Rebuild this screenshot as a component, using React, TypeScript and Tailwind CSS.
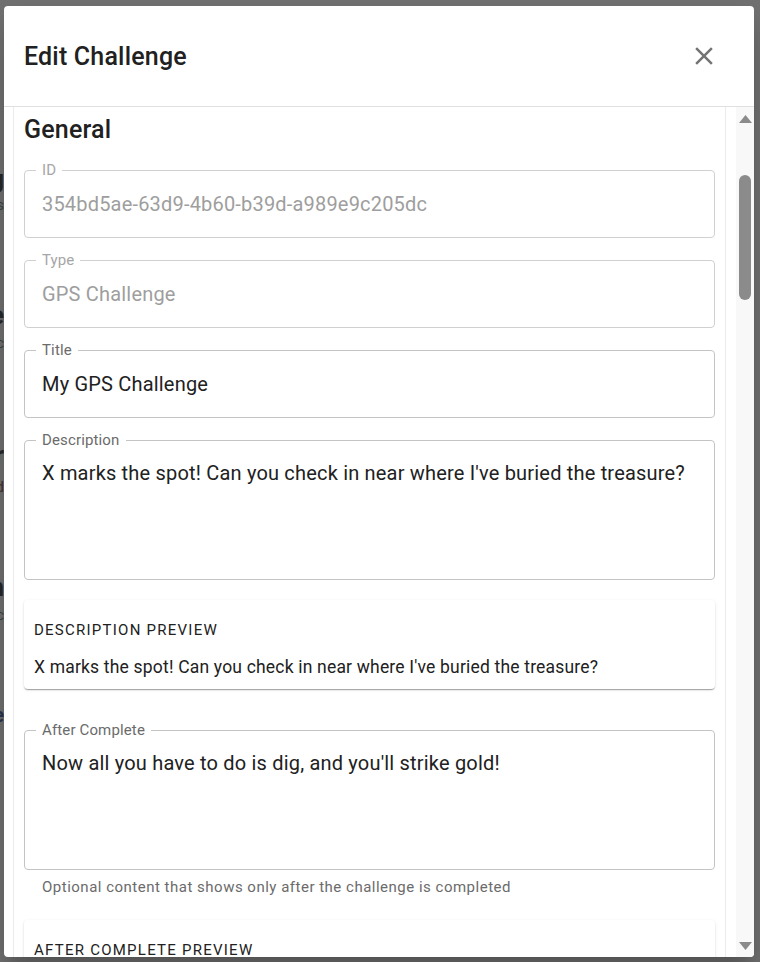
import React from 'react';

// Page behind the dialog: only the last letters peek out at the left edge.
const behind = [
    { text: 'Getting', cls: 'mt-[164px] text-[26px] font-bold text-[#1c1c1c] leading-[30px]' },
    { text: 'details', cls: 'mt-[0px] text-[15px] text-[#2e3a3a] leading-[22px]' },
    { text: 'Practice', cls: 'mt-[84px] text-[26px] font-bold text-[#1c1c1c] leading-[30px]' },
    { text: 'topic', cls: 'mt-[2px] text-[15px] text-[#2e3a3a] leading-[22px]' },
    { text: 'Number', cls: 'mt-[86px] text-[26px] font-bold text-[#1c1c1c] leading-[30px]' },
    { text: 'Hard', cls: 'mt-[6px] text-[15px] text-[#3a2424] leading-[22px]' },
    { text: 'Garden', cls: 'mt-[74px] text-[26px] font-bold text-[#1c1c1c] leading-[30px]' },
    { text: 'topic', cls: 'mt-[2px] text-[15px] text-[#2e3a3a] leading-[22px]' },
    { text: 'Some', cls: 'mt-[76px] text-[20px] font-bold text-[#1f2a44] leading-[26px]' },
];

type FieldProps = {
    label: string;
    value: string;
    disabled?: boolean;
    multiline?: boolean;
    height: string;
    className?: string;
};

const Field: React.FC<FieldProps> = ({ label, value, disabled, multiline, height, className }) => {
    return (
        <div
            className={`relative rounded-[4px] border ${disabled ? 'border-[#d0d0d0]' : 'border-[#c4c4c4]'} ${height} ${className ?? ''} ${
                multiline ? 'pt-[18px] px-[17px]' : 'flex items-center px-[17px]'
            }`}
        >
            <span
                className={`absolute -top-[11px] left-[11px] bg-white px-[6px] text-[15px] leading-[20px] tracking-[0.00938em] ${
                    disabled ? 'text-[#a6a6a6]' : 'text-[#6b6b6b]'
                }`}
            >
                {label}
            </span>
            <span className={`text-[20px] leading-[28px] tracking-[0.00938em] ${disabled ? 'text-[#9e9e9e]' : 'text-[#212121]'}`}>
                {value}
            </span>
        </div>
    );
};

const Preview: React.FC<{ title: string; body?: string; className?: string }> = ({ title, body, className }) => {
    return (
        <div
            className={`rounded-[4px] bg-white px-[10px] pt-[11px] pb-[10px] shadow-[0_2px_1px_-1px_rgba(0,0,0,0.2),0_1px_1px_0_rgba(0,0,0,0.14),0_1px_3px_0_rgba(0,0,0,0.12)] ${className ?? ''}`}
        >
            <div className="text-[15px] leading-[38px] uppercase tracking-[0.0833em] text-[#212121]">{title}</div>
            {body && <div className="mt-[6px] text-[17.5px] leading-[24px] tracking-[0.01071em] text-[#212121]">{body}</div>}
        </div>
    );
};

const Triangle: React.FC<{ down?: boolean }> = ({ down }) => (
    <svg width="13" height="8" viewBox="0 0 13 8" className="block">
        {down ? <polygon points="0,0 13,0 6.5,8" fill="#8b8b8b" /> : <polygon points="6.5,0 13,8 0,8" fill="#8b8b8b" />}
    </svg>
);

const App: React.FC = () => {
    return (
        <div className="flex h-[962px] w-[760px] overflow-hidden bg-[#707070] font-['Roboto',sans-serif]">
            {/* page behind the backdrop */}
            <div className="flex w-[4px] shrink-0 flex-col overflow-hidden">
                {behind.map((b, i) => (
                    <div key={i} className={`w-[4px] overflow-hidden whitespace-nowrap [direction:rtl] opacity-90 ${b.cls}`}>
                        {b.text}
                    </div>
                ))}
            </div>

            {/* dialog */}
            <div className="mt-[6px] flex h-[951px] w-[750px] shrink-0 flex-col overflow-hidden rounded-[4px] bg-white shadow-[0_11px_15px_-7px_rgba(0,0,0,0.2),0_24px_38px_3px_rgba(0,0,0,0.14)]">
                <div className="flex h-[101px] shrink-0 items-center justify-between border-b border-[#e0e0e0] pt-[2px] pl-[20px] pr-[35px]">
                    <h2 className="text-[25px] font-medium leading-[38px] tracking-[0.0075em] text-[#212121]">Edit Challenge</h2>
                    <svg width="30" height="30" viewBox="0 0 24 24" className="-mt-[2px] block">
                        <path
                            fill="#757575"
                            d="M19 6.41 17.59 5 12 10.59 6.41 5 5 6.41 10.59 12 5 17.59 6.41 19 12 13.41 17.59 19 19 17.59 13.41 12z"
                        />
                    </svg>
                </div>

                <div className="flex min-h-0 flex-1">
                    <div className="ml-[9px] flex w-[713px] shrink-0 flex-col overflow-hidden border-x border-[#ebebeb] px-[10px] pt-[4px]">
                        <h3 className="text-[25px] font-medium leading-[38px] tracking-[0.0075em] text-[#212121]">General</h3>

                        <Field label="ID" value="354bd5ae-63d9-4b60-b39d-a989e9c205dc" disabled height="h-[68px]" className="mt-[21px] shrink-0" />
                        <Field label="Type" value="GPS Challenge" disabled height="h-[68px]" className="mt-[22px] shrink-0" />
                        <Field label="Title" value="My GPS Challenge" height="h-[68px]" className="mt-[22px] shrink-0" />
                        <Field
                            label="Description"
                            value="X marks the spot! Can you check in near where I've buried the treasure?"
                            multiline
                            height="h-[140px]"
                            className="mt-[22px] shrink-0"
                        />

                        <Preview
                            title="Description Preview"
                            body="X marks the spot! Can you check in near where I've buried the treasure?"
                            className="mt-[20px] shrink-0"
                        />

                        <Field
                            label="After Complete"
                            value="Now all you have to do is dig, and you'll strike gold!"
                            multiline
                            height="h-[140px]"
                            className="mt-[41px] shrink-0"
                        />
                        <p className="mt-[5px] shrink-0 pl-[18px] text-[15px] leading-[24px] tracking-[0.0333em] text-[#6b6b6b]">
                            Optional content that shows only after the challenge is completed
                        </p>

                        <Preview title="After Complete Preview" body="Now all you have to do is dig, and you'll strike gold!" className="mt-[21px] shrink-0" />
                    </div>

                    <div className="w-[10px] shrink-0" />

                    {/* scrollbar */}
                    <div className="flex w-[18px] shrink-0 flex-col bg-[#f8f8f8]">
                        <div className="flex h-[22px] items-center justify-center pt-[1px]">
                            <Triangle />
                        </div>
                        <div className="flex-1 px-[3px] pt-[46px]">
                            <div className="h-[125px] rounded-full bg-[#8b8b8b]" />
                        </div>
                        <div className="flex h-[22px] items-center justify-center pb-[1px]">
                            <Triangle down />
                        </div>
                    </div>
                </div>
            </div>
        </div>
    );
};

export default App;
